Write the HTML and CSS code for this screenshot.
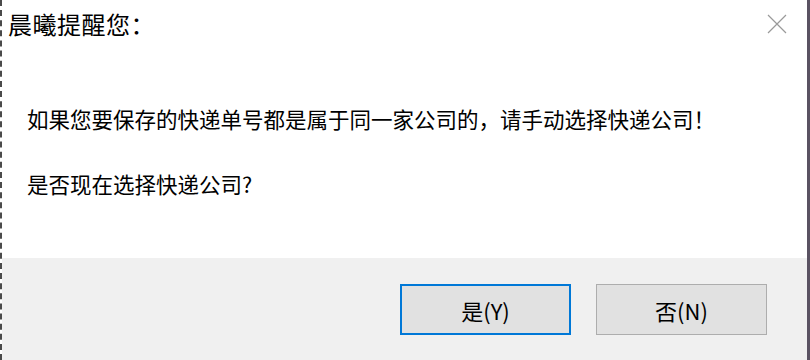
FILE: index.html
```html
<!DOCTYPE html>
<html lang="zh-CN">
<head>
<meta charset="utf-8">
<title>晨曦提醒您</title>
<link rel="stylesheet" href="styles.css">
</head>
<body>
<div class="dialog">
  <div class="content">
    <div class="title-row">
      <div class="title">晨曦提醒您：</div>
      <svg class="close" width="20" height="20" viewBox="0 0 20 20" aria-label="关闭">
        <path d="M1 1 L19 19 M19 1 L1 19" stroke="#9a9a9a" stroke-width="1.2" fill="none"/>
      </svg>
    </div>
    <p class="msg msg-first">如果您要保存的快递单号都是属于同一家公司的，请手动选择快递公司！</p>
    <p class="msg msg-second">是否现在选择快递公司?</p>
  </div>
  <div class="footer">
    <button class="btn btn-default">是(Y)</button>
    <button class="btn">否(N)</button>
  </div>
</div>
</body>
</html>
```

FILE: styles.css
```css
html, body {
  margin: 0;
  padding: 0;
  background: #ffffff;
}

.dialog {
  width: 810px;
  height: 360px;
  box-sizing: border-box;
  border-left: 2px dashed #4a4a4a;
  border-right: 3px solid #5a5262;
  display: flex;
  flex-direction: column;
  font-family: "Noto Sans CJK SC", "Noto Sans", sans-serif;
  color: #000000;
}

.content {
  height: 258px;
  background: #ffffff;
  box-sizing: border-box;
  padding-top: 8px;
}

.title-row {
  display: flex;
  justify-content: space-between;
  align-items: center;
  padding-left: 6px;
  padding-right: 20px;
  height: 32px;
}

.title {
  font-size: 24px;
  line-height: 32px;
  color: #000000;
  letter-spacing: 0.5px;
}

.close {
  display: block;
}

.msg {
  margin: 0;
  padding-left: 25px;
  font-size: 21.5px;
  line-height: 30px;
  white-space: nowrap;
}

.msg-first {
  margin-top: 64px;
}

.msg-second {
  margin-top: 35px;
}

.footer {
  flex: 1;
  background: #f0f0f0;
  display: flex;
  justify-content: flex-end;
  align-items: flex-start;
  gap: 25px;
  padding-top: 26px;
  padding-right: 40px;
}

.btn {
  width: 171px;
  height: 51px;
  box-sizing: border-box;
  background: #e1e1e1;
  border: 1px solid #adadad;
  font-family: "Noto Sans CJK SC", "Noto Sans", sans-serif;
  font-size: 22px;
  color: #000000;
  padding: 0;
  margin: 0;
}

.btn-default {
  border: 2px solid #0078d7;
}
```
